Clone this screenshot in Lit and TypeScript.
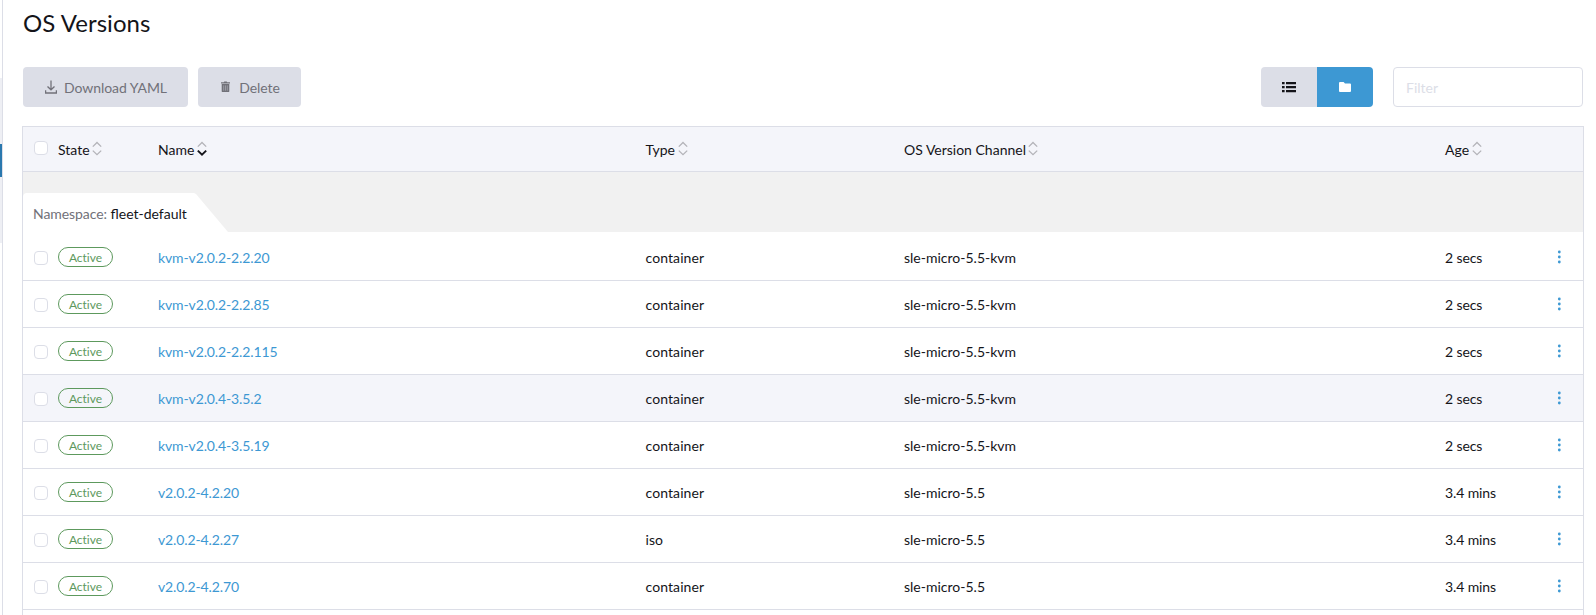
import { LitElement, html, css, svg } from "lit";
import { customElement, property } from "lit/decorators.js";
import { classMap } from "lit/directives/class-map.js";

interface Version {
  name: string;
  type: string;
  channel: string;
  age: string;
  hovered?: boolean;
}

const VERSIONS: Version[] = [
  { name: "kvm-v2.0.2-2.2.20", type: "container", channel: "sle-micro-5.5-kvm", age: "2 secs" },
  { name: "kvm-v2.0.2-2.2.85", type: "container", channel: "sle-micro-5.5-kvm", age: "2 secs" },
  { name: "kvm-v2.0.2-2.2.115", type: "container", channel: "sle-micro-5.5-kvm", age: "2 secs" },
  { name: "kvm-v2.0.4-3.5.2", type: "container", channel: "sle-micro-5.5-kvm", age: "2 secs", hovered: true },
  { name: "kvm-v2.0.4-3.5.19", type: "container", channel: "sle-micro-5.5-kvm", age: "2 secs" },
  { name: "v2.0.2-4.2.20", type: "container", channel: "sle-micro-5.5", age: "3.4 mins" },
  { name: "v2.0.2-4.2.27", type: "iso", channel: "sle-micro-5.5", age: "3.4 mins" },
  { name: "v2.0.2-4.2.70", type: "container", channel: "sle-micro-5.5", age: "3.4 mins" },
];

const COLUMNS = ["State", "Name", "Type", "OS Version Channel", "Age"];

@customElement("sort-icon")
class SortIcon extends LitElement {
  @property({ type: Boolean }) active = false;

  static styles = css`
    :host { display: block; width: 10px; height: 16px; }
    svg { display: block; }
    path { fill: none; stroke: #b3b3b8; stroke-width: 1.3; }
    .on { stroke: #141419; stroke-width: 1.9; }
  `;

  render() {
    return html`<svg width="10" height="16" viewBox="0 0 10 16">
      <path d="M.8 5.6 5 1.5l4.2 4.1" />
      <path class=${classMap({ on: this.active })} d="M.8 9.6 5 13.6l4.2-4" />
    </svg>`;
  }
}

@customElement("app-root")
class AppRoot extends LitElement {
  static styles = css`
    :host {
      display: flex;
      width: 100%;
      height: 615px;
      overflow: hidden;
      background: #fff;
      color: #141419;
      font: 14px/20px Lato, "Open Sans", sans-serif;
    }
    * { box-sizing: border-box; }
    .rail {
      display: flex;
      flex-direction: column;
      flex: none;
      width: 3px;
      padding-top: 78px;
      border-right: 1px solid #dcdee7;
    }
    .rail-group { height: 165px; padding-top: 66px; background: #eeeff4; }
    .rail-active { height: 33px; background: #2a78ae; }
    main { flex: 1; padding: 8px 12px 0 19px; }
    h1 {
      margin: 0 0 30px 1px;
      font-size: 24px;
      line-height: 29px;
      font-weight: 400;
      letter-spacing: 0.06px;
    }
    .toolbar { display: flex; height: 40px; margin: 0 1px 19px; }
    button { border: 0; padding: 0; font: inherit; }
    .bulk {
      display: flex;
      align-items: center;
      justify-content: center;
      width: 165px;
      margin-right: 10px;
      padding-left: 1px;
      border-radius: 4px;
      background: #dcdee7;
      color: #717179;
      gap: 7px;
    }
    .bulk span { padding-top: 2px; letter-spacing: -0.05px; }
    .bulk.delete { width: 103px; gap: 9px; padding-left: 2px; }
    .bulk svg { display: block; }
    .toggle { display: flex; margin-left: auto; border-radius: 4px; overflow: hidden; }
    .toggle button {
      display: grid;
      place-items: center;
      width: 56px;
      background: #dcdee7;
      color: #141419;
    }
    .toggle .selected { background: #3d98d3; color: #fff; }
    input[type="search"] {
      width: 190px;
      margin: 0 0 0 20px;
      padding: 2px 12px 0;
      border: 1px solid #dcdee7;
      border-radius: 4px;
      background: #fff;
      font: inherit;
      appearance: none;
      outline: 0;
    }
    input::placeholder { color: #dcdee7; opacity: 1; }
    .table { border: 1px solid #dcdee7; height: 520px; }
    .row {
      display: grid;
      grid-template-columns: 35px 100px 487.5px 258.5px 541px 1fr 26px;
      align-items: center;
      height: 47px;
      border-bottom: 1px solid #dcdee7;
    }
    .row.first { height: 49px; padding-top: 2px; }
    .row.head { height: 45px; background: #f4f5fa; }
    .row.hovered { background: #f4f5fa; }
    .col { display: flex; align-items: center; gap: 2.5px; padding-top: 2px; }
    .col sort-icon { margin-top: -3px; }
    .check {
      width: 14px;
      height: 14px;
      margin-left: 11px;
      border: 1px solid #dcdee7;
      border-radius: 4px;
      background: #fff;
    }
    .head .check { margin-top: -3px; }
    .row:not(.head) .check { margin-top: 2px; }
    .cell { padding-top: 2px; }
    .type { letter-spacing: 0.09px; }
    .age { letter-spacing: -0.12px; }
    .badge {
      justify-self: start;
      width: 55px;
      height: 20px;
      border: 1px solid #5d995d;
      border-radius: 10px;
      color: #5d995d;
      font-size: 12px;
      line-height: 20px;
      text-align: center;
      font-variant-ligatures: none;
    }
    .link { color: #3d98d3; text-decoration: none; letter-spacing: -0.12px; }
    .menu { display: block; }
    .group { display: flex; align-items: flex-end; height: 60px; background: #f1f1f1; }
    .tab {
      width: 206px;
      height: 39px;
      padding: 11px 0 0 10px;
      border-top-left-radius: 4px;
      background: #fff;
      color: #717179;
      letter-spacing: -0.07px;
      clip-path: polygon(0 0, 171px 0, 173px 1px, 205px 100%, 0 100%);
    }
    .tab b { font-weight: 400; color: #141419; letter-spacing: normal; }
  `;

  private version(v: Version, i: number) {
    return html`<div class=${classMap({ row: true, first: i === 0, hovered: !!v.hovered })}>
      <span class="check"></span>
      <span class="badge">Active</span>
      <a class="cell link">${v.name}</a>
      <span class="cell type">${v.type}</span>
      <span class="cell">${v.channel}</span>
      <span class="cell age">${v.age}</span>
      <svg class="menu" width="4" height="14" viewBox="0 0 4 14" fill="#3d98d3">
        ${[2, 7, 12].map((y) => svg`<circle cx="2.3" cy=${y} r="1.4" />`)}
      </svg>
    </div>`;
  }

  render() {
    return html`
      <div class="rail"><div class="rail-group"><div class="rail-active"></div></div></div>
      <main>
        <h1>OS Versions</h1>
        <div class="toolbar">
          <button class="bulk">
            <svg width="12" height="14" viewBox="0 0 12 14" fill="none" stroke="currentColor" stroke-width="1.3">
              <path d="M6 .5v9.2M2.5 6.5 6 9.8l3.5-3.3M.6 10.2V13h10.8v-2.8" />
            </svg>
            <span>Download YAML</span>
          </button>
          <button class="bulk delete">
            <svg width="9" height="12" viewBox="0 0 9 12" fill="currentColor">
              <path d="M0 1.2h2.8L3.3.4h2.4l.5.8H9v1.2H0zM.7 3h7.6v7.2a.9.9 0 0 1-.9.9H1.6a.9.9 0 0 1-.9-.9z" />
              <path d="M2.7 4.4v5.3M4.5 4.4v5.3M6.3 4.4v5.3" stroke="#dcdee7" stroke-width=".4" />
            </svg>
            <span>Delete</span>
          </button>
          <div class="toggle">
            <button>
              <svg width="14" height="12" viewBox="0 0 14 12" fill="currentColor">
                <path d="M0 1h2.6v2.2H0zM4 1h10v2.2H4zM0 5h2.6v2.2H0zM4 5h10v2.2H4zM0 9h2.6v2.2H0zM4 9h10v2.2H4z" />
              </svg>
            </button>
            <button class="selected">
              <svg width="12" height="12" viewBox="0 0 12 12" fill="currentColor">
                <path d="M0 2a1 1 0 0 1 1-1h3.6L6 2.6h5a1 1 0 0 1 1 1V10a1 1 0 0 1-1 1H1a1 1 0 0 1-1-1z" />
              </svg>
            </button>
          </div>
          <input type="search" placeholder="Filter" />
        </div>
        <div class="table">
          <div class="row head">
            <span class="check"></span>
            ${COLUMNS.map((c) => html`<span class="col">${c}<sort-icon ?active=${c === "Name"}></sort-icon></span>`)}
          </div>
          <div class="group"><div class="tab">Namespace: <b>fleet-default</b></div></div>
          ${VERSIONS.map((v, i) => this.version(v, i))}
        </div>
      </main>
    `;
  }
}
